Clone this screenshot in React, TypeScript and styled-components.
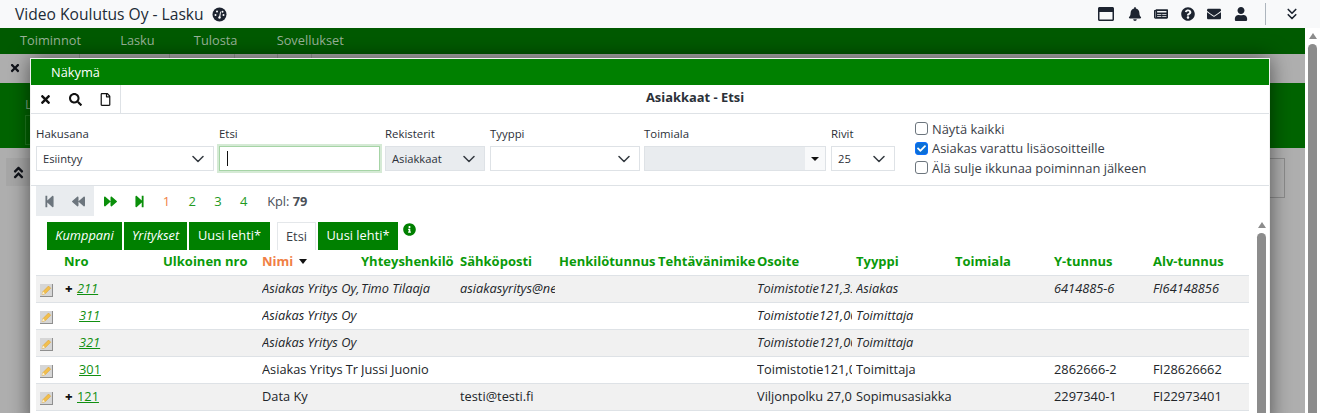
import React from 'react';
import styled, { createGlobalStyle } from 'styled-components';
import { ChevronsDown } from 'lucide-react';
import {
  FaRegWindowMaximize, FaBell, FaNewspaper, FaQuestionCircle, FaEnvelope, FaUser, FaAngleDoubleUp,
  FaTimes, FaSearch, FaRegFile, FaStepBackward, FaStepForward, FaBackward, FaForward, FaInfoCircle, FaCheck,
} from 'react-icons/fa';

const GlobalStyle = createGlobalStyle`
  html, body { margin: 0; padding: 0; overflow: hidden; }
  body { font-family: "Open Sans", "Liberation Sans", sans-serif; font-size: 12.8px; color: #212529; }
`;

const Page = styled.div`
  position: relative;
  width: 1320px;
  height: 413px;
  overflow: hidden;
  background: #fff;
`;

const TopBar = styled.header`
  height: 28px;
  background: #f8f9fa;
  display: flex;
  align-items: center;
  padding-left: 15px;
  color: #212b36;
`;

const Title = styled.h1`
  margin: 0;
  font-size: 15.6px;
  font-weight: 400;
  line-height: 28px;
`;

const TitleIcon = styled.span`
  display: flex;
  margin-left: 8px;
`;

const TopIcons = styled.div`
  margin-left: auto;
  display: flex;
  align-items: center;
  color: #1d2430;
  font-size: 14px;
`;

const TopIcon = styled.span<{ $w?: number; $size?: number }>`
  width: ${(p) => p.$w ?? 26.5}px;
  display: flex;
  justify-content: center;
  font-size: ${(p) => p.$size ?? 14}px;
`;

const TopDivider = styled.span`
  width: 1px;
  height: 22px;
  background: #adb5bd;
  margin: 0 17px 0 11px;
`;

const CollapseTop = styled.span`
  display: flex;
  margin-right: 19px;
`;

const Below = styled.div`
  display: flex;
  height: 385px;
`;

const Backdrop = styled.main`
  width: 1305px;
  background: #afafaf;
`;

const MenuBar = styled.nav`
  height: 26px;
  box-sizing: border-box;
  padding: 0 0 2px 20px;
  background: #005a00;
  display: flex;
  align-items: center;
  gap: 39.2px;
  color: #99b299;
`;

const SubBar = styled.div`
  height: 29px;
  display: flex;
  background: #afafaf;
`;

const SubTab = styled.div<{ $w: number }>`
  width: ${(p) => p.$w}px;
  border-right: 1px solid #999;
  display: flex;
  padding: 8px 0 0 9px;
  box-sizing: border-box;
  font-size: 12px;
  color: #10131a;
`;

const GreenBand = styled.div`
  height: 65px;
  box-sizing: border-box;
  background: #006400;
  padding: 12px 0 0 25px;
  color: #7fa77f;
`;

const BandBox = styled.div`
  width: 80px;
  height: 28px;
  margin-top: 2px;
  border: 1px solid #1f7a1f;
`;

const Lower = styled.div`
  padding: 10px 20px 0 6px;
  display: flex;
  height: 255px;
  box-sizing: border-box;
`;

const CollapseBtn = styled.div`
  width: 24px;
  height: 28px;
  background: #a7a7a7;
  display: flex;
  align-items: center;
  justify-content: center;
  font-size: 15px;
  color: #10131a;
`;

const BackPanel = styled.div`
  flex: 1;
  border: 1px solid #8c8c8c;
  border-left: 0;
  height: 38px;
`;

const PageScroll = styled.div`
  width: 15px;
  background: #fff;
  display: flex;
  flex-direction: column;
  align-items: center;
`;

const ScrollArrow = styled.span`
  width: 0;
  height: 0;
  margin-top: 5px;
  border-left: 4.5px solid transparent;
  border-right: 4.5px solid transparent;
  border-bottom: 6px solid #8c8c8c;
`;

const ScrollThumb = styled.span`
  width: 9px;
  flex: 1;
  margin-top: 5px;
  background: #8c8c8c;
  border-radius: 5px 5px 0 0;
`;

const Modal = styled.section`
  position: absolute;
  left: 30px;
  top: 58px;
  width: 1240px;
  height: 370px;
  box-sizing: border-box;
  border: 1px solid #f2f2f2;
  background: #fff;
  box-shadow: 0 0 20px rgba(0, 0, 0, 0.55);
  overflow: hidden;
`;

const ModalHead = styled.div`
  height: 26px;
  background: #008000;
  color: #fff;
  padding-left: 20px;
  line-height: 26px;
`;

const ToolBar = styled.div`
  height: 29px;
  box-sizing: border-box;
  border-bottom: 1px solid #dee2e6;
  display: flex;
  align-items: center;
`;

const ToolBtns = styled.div`
  width: 90px;
  height: 100%;
  border-right: 1px solid #dee2e6;
  display: flex;
  align-items: center;
  gap: 17px;
  padding-left: 8px;
  box-sizing: border-box;
  font-size: 13px;
  color: #111;
`;

const ToolTitle = styled.div`
  flex: 1;
  text-align: center;
  font-size: 12.9px;
  font-weight: 700;
  padding-bottom: 4px;
  color: #2b3038;
`;

const SearchRow = styled.div`
  height: 72px;
  box-sizing: border-box;
  border-bottom: 1px solid #dee2e6;
  display: flex;
  padding: 12px 0 0 5px;
`;

const Field = styled.div<{ $w: number; $gap?: number }>`
  width: ${(p) => p.$w}px;
  margin-right: ${(p) => p.$gap ?? 5}px;
`;

const Label = styled.div`
  font-size: 11.4px;
  line-height: 16px;
  height: 20px;
  color: #2b3038;
`;

const SelectBox = styled.div<{ $off?: boolean }>`
  height: 25px;
  box-sizing: border-box;
  border: 1px solid #dee2e6;
  background: ${(p) => (p.$off ? '#e9ecef' : '#fff')};
  display: flex;
  align-items: center;
  justify-content: space-between;
  padding: 0 9px 0 6px;
  font-size: 11.2px;
  color: #2b3038;
`;

const Chevron = () => (
  <svg width="12" height="8" viewBox="0 0 12 8" fill="none" stroke="#343a40" strokeWidth="1.5" strokeLinecap="round" strokeLinejoin="round">
    <path d="M1 1.5l5 5 5-5" />
  </svg>
);

const TextInput = styled.div`
  height: 25px;
  box-sizing: border-box;
  border: 1px solid #a6d4a6;
  box-shadow: 0 0 0 2px #d5ead5;
  background: #fff;
  display: flex;
  align-items: center;
  padding-left: 7px;
`;

const Caret = styled.span`
  width: 1px;
  height: 15px;
  background: #111;
`;

const ComboBox = styled.div`
  height: 25px;
  box-sizing: border-box;
  border: 1px solid #dee2e6;
  background: #e9ecef;
  display: flex;
  justify-content: flex-end;
`;

const ComboBtn = styled.span`
  width: 20px;
  background: #f8f9fa;
  display: flex;
  align-items: center;
  justify-content: center;
  &::after {
    content: '';
    border-left: 4px solid transparent;
    border-right: 4px solid transparent;
    border-top: 4px solid #111;
  }
`;

const Checks = styled.div`
  margin: -7px 0 0 15px;
  display: flex;
  flex-direction: column;
  color: #3a4048;
`;

const CheckRow = styled.label`
  height: 19.5px;
  display: flex;
  align-items: center;
  gap: 4px;
  font-size: 12.9px;
`;

const CheckMark = styled.span<{ $on?: boolean }>`
  width: 13px;
  height: 13px;
  box-sizing: border-box;
  border-radius: 3px;
  border: 1px solid ${(p) => (p.$on ? '#0d6efd' : '#6c757d')};
  background: ${(p) => (p.$on ? '#0b6fd6' : '#fff')};
  color: #fff;
  font-size: 9px;
  display: flex;
  align-items: center;
  justify-content: center;
`;

const Pager = styled.div`
  height: 30px;
  padding-left: 5px;
  display: flex;
  align-items: center;
`;

const PagerOff = styled.div`
  width: 58px;
  height: 100%;
  background: #e9ecef;
  display: flex;
  align-items: center;
`;

const PagerIcon = styled.span<{ $w: number; $on?: boolean }>`
  width: ${(p) => p.$w}px;
  display: flex;
  justify-content: center;
  color: ${(p) => (p.$on ? '#0a8f0a' : '#6c757d')};
  font-size: 13px;
`;

const PageNum = styled.span<{ $cur?: boolean }>`
  width: 25.8px;
  text-align: center;
  font-size: 13px;
  color: ${(p) => (p.$cur ? '#f07f45' : '#1f9a1f')};
`;

const Count = styled.span`
  margin-left: 10.5px;
  color: #4a4f57;
  b { font-weight: 700; }
`;

const TabRow = styled.div`
  height: 29px;
  margin-top: 5px;
  padding-left: 16px;
  display: flex;
  align-items: flex-end;
  gap: 2px;
`;

const Tab = styled.div<{ $w: number; $it?: boolean }>`
  width: ${(p) => p.$w}px;
  height: 28px;
  background: #008000;
  color: #fff;
  line-height: 27px;
  text-align: center;
  font-style: ${(p) => (p.$it ? 'italic' : 'normal')};
  font-weight: ${(p) => (p.$it ? 500 : 400)};
`;

const PlainTab = styled.div`
  width: 39px;
  height: 28px;
  margin-left: 5px;
  box-sizing: border-box;
  border: 1px solid #e4e7ea;
  border-bottom: 0;
  line-height: 27px;
  text-align: center;
  color: #3a4048;
`;

const TabInfo = styled.span`
  display: flex;
  align-self: flex-start;
  margin: 2px 0 0 3px;
  color: #008000;
  font-size: 13px;
`;

const Table = styled.div`
  margin-left: 5px;
  width: 1213px;
`;

const Row = styled.div<{ $head?: boolean; $odd?: boolean; $it?: boolean }>`
  display: grid;
  grid-template-columns: 28px repeat(12, 99px);
  height: ${(p) => (p.$head ? 26 : 27)}px;
  box-sizing: border-box;
  border-bottom: 1px solid #dee2e6;
  background: ${(p) => (p.$odd ? '#f1f1f1' : '#fff')};
  font-style: ${(p) => (p.$it ? 'italic' : 'normal')};
  overflow: hidden;
`;

const HeadCell = styled.div<{ $sorted?: boolean }>`
  font-weight: 700;
  font-size: 13px;
  line-height: 22px;
  height: 22px;
  white-space: nowrap;
  display: flex;
  align-items: center;
  gap: 6px;
  color: ${(p) => (p.$sorted ? '#f07f45' : '#0a9a0a')};
`;

const SortCaret = styled.span`
  border-left: 4px solid transparent;
  border-right: 4px solid transparent;
  border-top: 5px solid #111;
`;

const Cell = styled.div`
  font-size: 12.8px;
  line-height: 24px;
  white-space: nowrap;
  overflow: hidden;
  color: #212529;
`;

const ClippedCell = styled(Cell)`
  margin-right: 4px;
`;

const IconCell = styled.div`
  display: flex;
  align-items: center;
  padding: 2px 0 0 4px;
`;

const NoCell = styled.div<{ $branch?: boolean }>`
  display: flex;
  align-items: center;
  height: 24px;
  padding-left: ${(p) => (p.$branch ? 1 : 15)}px;
`;

const Expander = styled.span`
  width: 12px;
  font-size: 13px;
  font-weight: 800;
  font-style: normal;
  color: #111;
`;

const NoLink = styled.a`
  color: #118f11;
  text-decoration: underline;
`;

const ModalScroll = styled.div`
  position: absolute;
  left: 1226px;
  top: 158px;
  width: 9px;
  height: 212px;
  display: flex;
  flex-direction: column;
  align-items: center;
`;

const Pencil = () => (
  <svg width="13" height="13" viewBox="0 0 13 13">
    <rect x="0" y="0" width="13" height="13" fill="#8f8f8f" />
    <rect x="0" y="0" width="12" height="12" fill="#d6d6d6" />
    <path d="M2 10.5l1-3 5.5-5.5 2.2 2.2-5.5 5.5z" fill="#f2bf4c" stroke="#d99a2b" strokeWidth="0.5" />
    <path d="M2 10.5l1-3 2 2z" fill="#fbf3d8" />
  </svg>
);

const Gauge = () => (
  <svg width="15" height="15" viewBox="0 0 15 15">
    <circle cx="7.5" cy="7.5" r="7" fill="#1d2430" />
    <path d="M7 10.5l1.2-6 .8.2-.8 5.8z" fill="#fff" />
    <circle cx="7.5" cy="10.5" r="1.2" fill="#fff" />
    <circle cx="3.5" cy="8" r="1" fill="#fff" />
    <circle cx="5" cy="4.5" r="1" fill="#fff" />
    <circle cx="11.5" cy="8" r="1" fill="#fff" />
    <circle cx="10.5" cy="4.8" r="1" fill="#fff" />
  </svg>
);

const columns = ['Nro', 'Ulkoinen nro', 'Nimi', 'Yhteyshenkilö', 'Sähköposti', 'Henkilötunnus', 'Tehtävänimike', 'Osoite', 'Tyyppi', 'Toimiala', 'Y-tunnus', 'Alv-tunnus'];

const rows = [
  { no: '211', branch: true, it: true, name: 'Asiakas Yritys Oy,', contact: 'Timo Tilaaja', mail: 'asiakasyritys@netti.fi', addr: 'Toimistotie121,33100', type: 'Asiakas', y: '6414885-6', alv: 'FI64148856' },
  { no: '311', it: true, name: 'Asiakas Yritys Oy', contact: '', mail: '', addr: 'Toimistotie121,00100', type: 'Toimittaja', y: '', alv: '' },
  { no: '321', it: true, name: 'Asiakas Yritys Oy', contact: '', mail: '', addr: 'Toimistotie121,00100', type: 'Toimittaja', y: '', alv: '' },
  { no: '301', name: 'Asiakas Yritys Tr', contact: 'Jussi Juonio', mail: '', addr: 'Toimistotie121,00100', type: 'Toimittaja', y: '2862666-2', alv: 'FI28626662' },
  { no: '121', branch: true, name: 'Data Ky', contact: '', mail: 'testi@testi.fi', addr: 'Viljonpolku 27,00100', type: 'Sopimusasiakka', y: '2297340-1', alv: 'FI22973401' },
];

export default function App() {
  return (
    <Page>
      <GlobalStyle />
      <TopBar>
        <Title>Video Koulutus Oy - Lasku</Title>
        <TitleIcon><Gauge /></TitleIcon>
        <TopIcons>
          <TopIcon $w={31} $size={16}><FaRegWindowMaximize /></TopIcon>
          <TopIcon><FaBell /></TopIcon>
          <TopIcon><FaNewspaper /></TopIcon>
          <TopIcon><FaQuestionCircle /></TopIcon>
          <TopIcon><FaEnvelope /></TopIcon>
          <TopIcon><FaUser /></TopIcon>
          <TopDivider />
          <CollapseTop><ChevronsDown size={18} strokeWidth={2.2} /></CollapseTop>
        </TopIcons>
      </TopBar>
      <Below>
        <Backdrop>
          <MenuBar>
            <span>Toiminnot</span>
            <span>Lasku</span>
            <span>Tulosta</span>
            <span>Sovellukset</span>
          </MenuBar>
          <SubBar>
            <SubTab $w={80}><FaTimes /></SubTab>
            <SubTab $w={90} />
            <SubTab $w={65} />
            <SubTab $w={43} />
            <SubTab $w={34} />
          </SubBar>
          <GreenBand>
            L
            <BandBox />
          </GreenBand>
          <Lower>
            <CollapseBtn><FaAngleDoubleUp /></CollapseBtn>
            <BackPanel />
          </Lower>
        </Backdrop>
        <PageScroll>
          <ScrollArrow />
          <ScrollThumb />
        </PageScroll>
      </Below>
      <Modal>
        <ModalHead>Näkymä</ModalHead>
        <ToolBar>
          <ToolBtns>
            <FaTimes />
            <FaSearch />
            <FaRegFile />
          </ToolBtns>
          <ToolTitle>Asiakkaat - Etsi</ToolTitle>
        </ToolBar>
        <SearchRow>
          <Field $w={178}>
            <Label>Hakusana</Label>
            <SelectBox>Esiintyy<Chevron /></SelectBox>
          </Field>
          <Field $w={161}>
            <Label>Etsi</Label>
            <TextInput><Caret /></TextInput>
          </Field>
          <Field $w={100}>
            <Label>Rekisterit</Label>
            <SelectBox $off>Asiakkaat<Chevron /></SelectBox>
          </Field>
          <Field $w={150} $gap={4}>
            <Label>Tyyppi</Label>
            <SelectBox><span /><Chevron /></SelectBox>
          </Field>
          <Field $w={182}>
            <Label>Toimiala</Label>
            <ComboBox><ComboBtn /></ComboBox>
          </Field>
          <Field $w={64}>
            <Label>Rivit</Label>
            <SelectBox>25<Chevron /></SelectBox>
          </Field>
          <Checks>
            <CheckRow><CheckMark />Näytä kaikki</CheckRow>
            <CheckRow><CheckMark $on><FaCheck /></CheckMark>Asiakas varattu lisäosoitteille</CheckRow>
            <CheckRow><CheckMark />Älä sulje ikkunaa poiminnan jälkeen</CheckRow>
          </Checks>
        </SearchRow>
        <Pager>
          <PagerOff>
            <PagerIcon $w={27}><FaStepBackward /></PagerIcon>
            <PagerIcon $w={31}><FaBackward /></PagerIcon>
          </PagerOff>
          <PagerIcon $w={32} $on><FaForward /></PagerIcon>
          <PagerIcon $w={27.5} $on><FaStepForward /></PagerIcon>
          <PageNum $cur>1</PageNum>
          <PageNum>2</PageNum>
          <PageNum>3</PageNum>
          <PageNum>4</PageNum>
          <Count>Kpl: <b>79</b></Count>
        </Pager>
        <TabRow>
          <Tab $w={75} $it>Kumppani</Tab>
          <Tab $w={63} $it>Yritykset</Tab>
          <Tab $w={81}>Uusi lehti*</Tab>
          <PlainTab>Etsi</PlainTab>
          <Tab $w={80}>Uusi lehti*</Tab>
          <TabInfo><FaInfoCircle /></TabInfo>
        </TabRow>
        <Table>
          <Row $head>
            <span />
            {columns.map((c) => (
              <HeadCell key={c} $sorted={c === 'Nimi'}>
                {c}
                {c === 'Nimi' && <SortCaret />}
              </HeadCell>
            ))}
          </Row>
          {rows.map((r, i) => (
            <Row key={r.no} $odd={i % 2 === 0} $it={r.it}>
              <IconCell><Pencil /></IconCell>
              <NoCell $branch={r.branch}>
                {r.branch && <Expander>+</Expander>}
                <NoLink>{r.no}</NoLink>
              </NoCell>
              <Cell />
              <Cell>{r.name}</Cell>
              <Cell>{r.contact}</Cell>
              <ClippedCell>{r.mail}</ClippedCell>
              <Cell />
              <Cell />
              <ClippedCell>{r.addr}</ClippedCell>
              <Cell>{r.type}</Cell>
              <Cell />
              <Cell>{r.y}</Cell>
              <Cell>{r.alv}</Cell>
            </Row>
          ))}
        </Table>
        <ModalScroll>
          <ScrollArrow />
          <ScrollThumb />
        </ModalScroll>
      </Modal>
    </Page>
  );
}
